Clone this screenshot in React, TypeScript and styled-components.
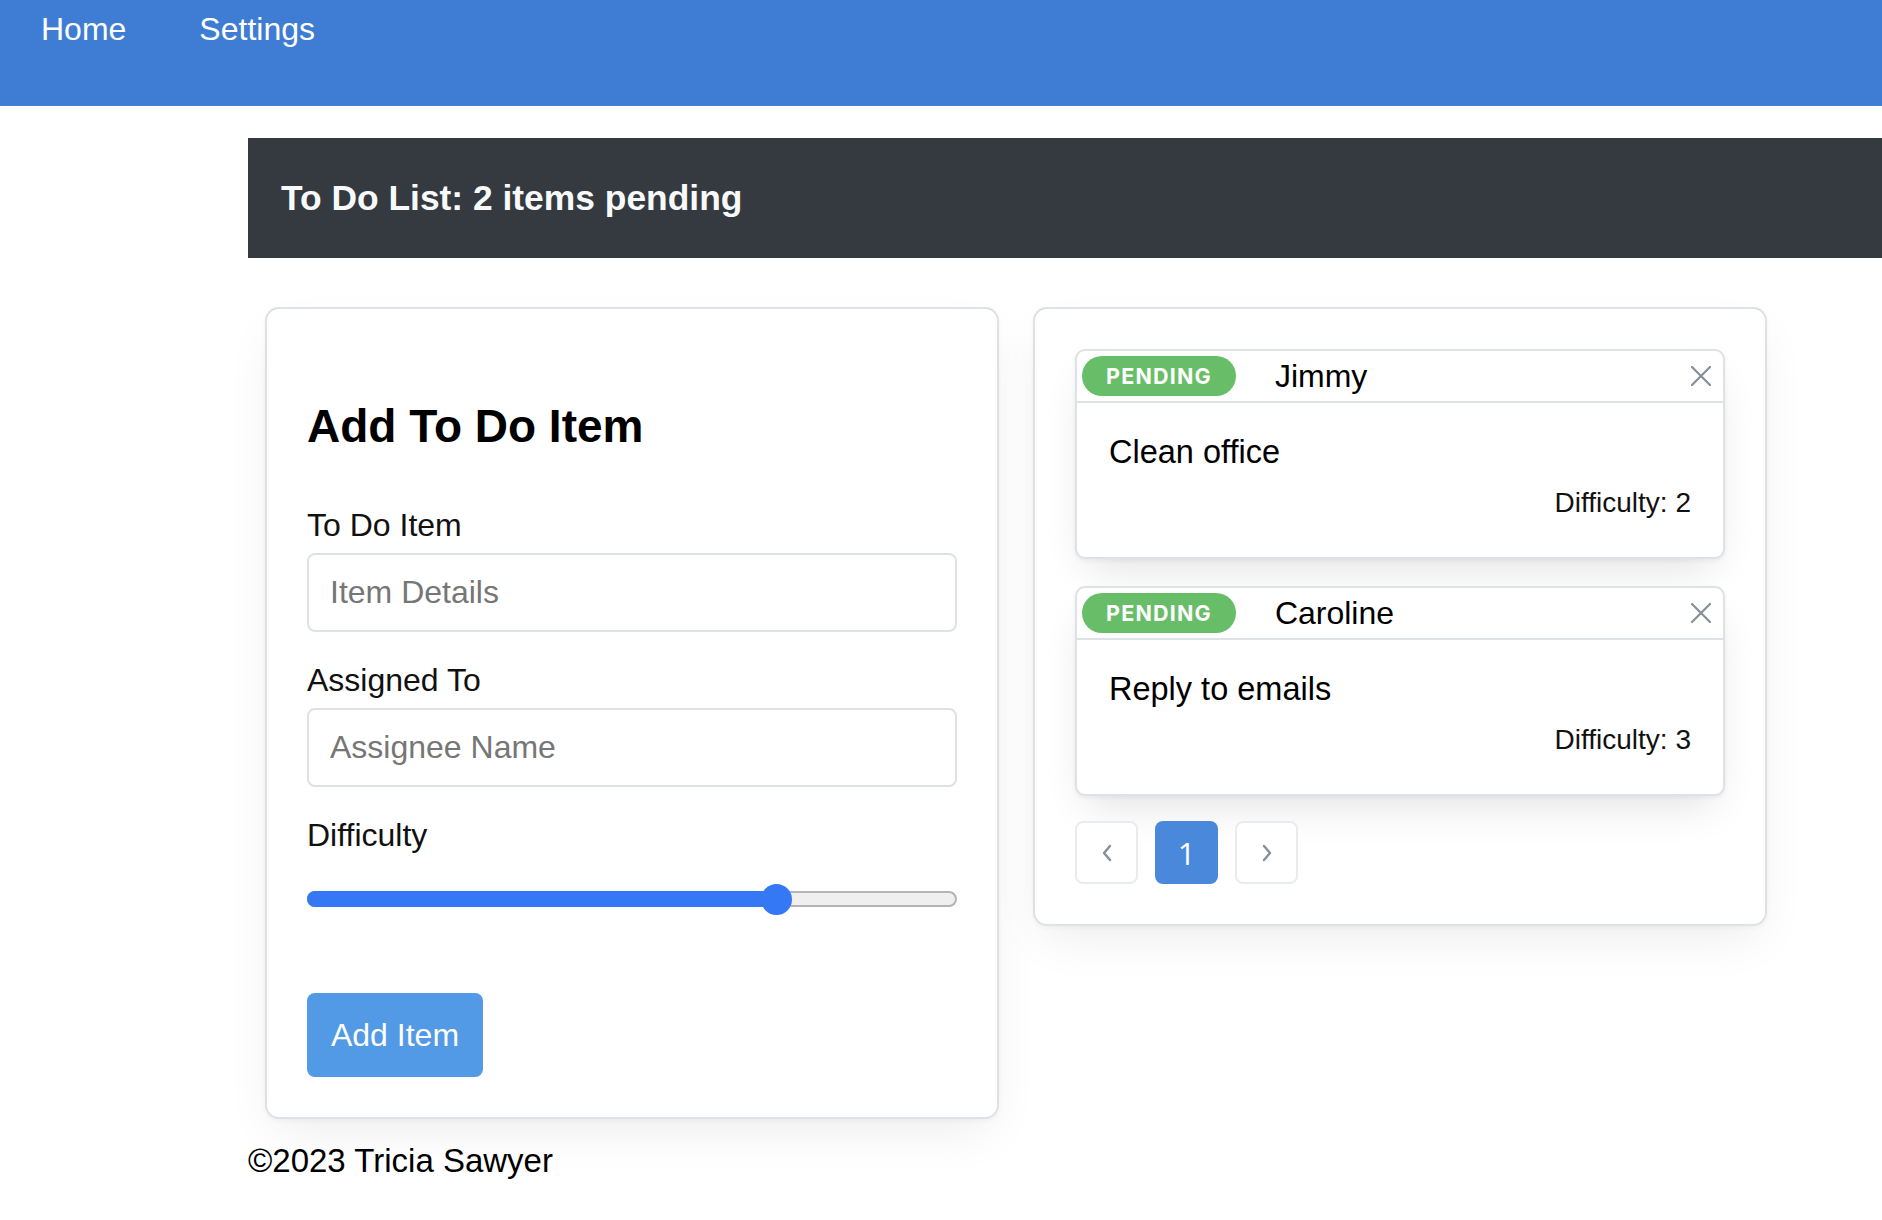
import React from "react";
import styled, { createGlobalStyle } from "styled-components";

const GlobalStyle = createGlobalStyle`
  body {
    margin: 0;
    background: #ffffff;
    font-family: "Liberation Sans", Arial, sans-serif;
    font-size: 32px;
    color: #000;
  }
  * { box-sizing: border-box; }
`;

const NavBar = styled.nav`
  height: 106px;
  background: #3e7dd3;
  display: flex;
  gap: 73px;
  padding: 5px 0 0 41px;
`;

const NavLink = styled.a`
  color: #ffffff;
  font-size: 32px;
  line-height: 48px;
  text-decoration: none;
`;

const Main = styled.main`
  padding-left: 248px;
`;

const TitleBar = styled.header`
  margin-top: 32px;
  height: 120px;
  background: #343a40;
  display: flex;
  align-items: center;
  padding-left: 33px;
`;

const Title = styled.h1`
  margin: 0;
  color: #f8f9fa;
  font-size: 35.4px;
  font-weight: 700;
  line-height: 42px;
`;

const Columns = styled.div`
  display: flex;
  align-items: flex-start;
  gap: 34px;
  padding: 49px 0 0 17px;
`;

const Card = styled.section`
  width: 734px;
  background: #fff;
  border: 2px solid #dee2e6;
  border-radius: 14px;
  padding: 40px;
  box-shadow: 0 2px 4px rgba(0, 0, 0, 0.04), 0 20px 50px -10px rgba(0, 0, 0, 0.08);
`;

const FormTitle = styled.h2`
  margin: 0 0 48px;
  padding-top: 50px;
  font-size: 46px;
  line-height: 54px;
  font-weight: 700;
  color: #000;
`;

const Field = styled.label`
  display: flex;
  flex-direction: column;
  gap: 4px;
  & + & {
    margin-top: 24px;
  }
`;

const LabelText = styled.span`
  font-size: 32px;
  line-height: 48px;
  color: #111;
`;

const TextInput = styled.input`
  height: 79px;
  width: 100%;
  border: 2px solid #dee2e6;
  border-radius: 8px;
  padding: 0 21px;
  font-family: "Liberation Sans", Arial, sans-serif;
  font-size: 32px;
  color: #212529;
  background: #fff;
  outline: none;
  &::placeholder {
    color: #767676;
  }
`;

const SliderBox = styled.div`
  margin-top: 24px;
  height: 32px;
  display: flex;
  align-items: center;
`;

const SliderTrack = styled.div`
  position: relative;
  width: 100%;
  height: 16px;
  border-radius: 8px;
  background: #efefef;
  border: 2px solid #b4b4b4;
`;

const SliderFill = styled.div`
  position: absolute;
  left: -2px;
  top: -2px;
  bottom: -2px;
  border-radius: 8px 0 0 8px;
  background: #3478f6;
`;

const SliderThumb = styled.div`
  position: absolute;
  top: 50%;
  width: 31px;
  height: 31px;
  margin-left: -15.5px;
  margin-top: -15.5px;
  border-radius: 50%;
  background: #3478f6;
`;

const SubmitButton = styled.button`
  margin-top: 78px;
  width: 176px;
  height: 84px;
  border: none;
  border-radius: 8px;
  background: #529ae6;
  color: #fff;
  font-family: "Liberation Sans", Arial, sans-serif;
  font-size: 32px;
  display: flex;
  align-items: center;
  justify-content: center;
`;

const ItemList = styled.div`
  display: flex;
  flex-direction: column;
  gap: 27px;
`;

const ItemCard = styled.article`
  border: 2px solid #dee2e6;
  border-radius: 10px;
  background: #fff;
  box-shadow: 0 2px 4px rgba(0, 0, 0, 0.05), 0 20px 40px -12px rgba(0, 0, 0, 0.12);
`;

const ItemHeader = styled.div`
  height: 52px;
  display: flex;
  align-items: center;
  padding: 0 4px 0 5px;
  border-bottom: 2px solid #dee2e6;
`;

const Badge = styled.span`
  height: 40px;
  padding: 0 24px;
  border-radius: 20px;
  background: #68bd68;
  color: #fff;
  font-family: Inter, "Noto Sans", sans-serif;
  font-weight: 700;
  font-size: 21.5px;
  letter-spacing: 1.2px;
  display: flex;
  align-items: center;
`;

const Assignee = styled.span`
  margin-left: 39px;
  font-size: 32px;
  line-height: 48px;
`;

const CloseButton = styled.button`
  margin-left: auto;
  width: 36px;
  height: 36px;
  border: none;
  background: transparent;
  padding: 0;
  display: flex;
  align-items: center;
  justify-content: center;
  color: #868e96;
`;

const ItemBody = styled.div`
  padding: 25px 32px 33px;
  display: flex;
  flex-direction: column;
  gap: 6px;
`;

const TaskText = styled.p`
  margin: 0;
  font-size: 32.5px;
  line-height: 48px;
`;

const DifficultyText = styled.p`
  margin: 0;
  font-size: 28px;
  line-height: 42px;
  text-align: right;
  color: #111;
`;

const Pager = styled.div`
  margin-top: 25px;
  display: flex;
  gap: 17px;
`;

const PageButton = styled.button<{ $active?: boolean }>`
  width: 63px;
  height: 63px;
  border-radius: 8px;
  border: ${(p) => (p.$active ? "none" : "2px solid #e9ecef")};
  background: ${(p) => (p.$active ? "#4a88dc" : "#fff")};
  color: ${(p) => (p.$active ? "#fff" : "#868e96")};
  font-family: "Open Sans", sans-serif;
  font-size: 31px;
  padding: 0;
  display: flex;
  align-items: center;
  justify-content: center;
`;

const Footer = styled.footer`
  margin-top: 18px;
  font-size: 33px;
  line-height: 48px;
`;

const CloseIcon = () => (
  <svg width="20" height="20" viewBox="0 0 20 20" fill="none">
    <path d="M1 1L19 19M19 1L1 19" stroke="currentColor" strokeWidth="2.2" strokeLinecap="round" />
  </svg>
);

const Chevron = ({ dir }: { dir: "left" | "right" }) => (
  <svg width="14" height="20" viewBox="0 0 14 20" fill="none">
    <path
      d={dir === "left" ? "M10 3L4 10L10 17" : "M4 3L10 10L4 17"}
      stroke="currentColor"
      strokeWidth="2.4"
      strokeLinecap="round"
      strokeLinejoin="round"
    />
  </svg>
);

const items = [
  { name: "Jimmy", text: "Clean office", difficulty: 2 },
  { name: "Caroline", text: "Reply to emails", difficulty: 3 },
];

export default function App() {
  const sliderPct = 72.3;
  return (
    <>
      <GlobalStyle />
      <NavBar>
        <NavLink>Home</NavLink>
        <NavLink>Settings</NavLink>
      </NavBar>
      <Main>
        <TitleBar>
          <Title>To Do List: 2 items pending</Title>
        </TitleBar>
        <Columns>
          <Card>
            <FormTitle>Add To Do Item</FormTitle>
            <Field>
              <LabelText>To Do Item</LabelText>
              <TextInput placeholder="Item Details" />
            </Field>
            <Field>
              <LabelText>Assigned To</LabelText>
              <TextInput placeholder="Assignee Name" />
            </Field>
            <Field>
              <LabelText>Difficulty</LabelText>
            </Field>
            <SliderBox>
              <SliderTrack>
                <SliderFill style={{ width: `calc(${sliderPct}% + 2px)` }} />
                <SliderThumb style={{ left: `${sliderPct}%` }} />
              </SliderTrack>
            </SliderBox>
            <SubmitButton>Add Item</SubmitButton>
          </Card>
          <Card>
            <ItemList>
              {items.map((it) => (
                <ItemCard key={it.name}>
                  <ItemHeader>
                    <Badge>PENDING</Badge>
                    <Assignee>{it.name}</Assignee>
                    <CloseButton aria-label="close">
                      <CloseIcon />
                    </CloseButton>
                  </ItemHeader>
                  <ItemBody>
                    <TaskText>{it.text}</TaskText>
                    <DifficultyText>Difficulty: {it.difficulty}</DifficultyText>
                  </ItemBody>
                </ItemCard>
              ))}
            </ItemList>
            <Pager>
              <PageButton>
                <Chevron dir="left" />
              </PageButton>
              <PageButton $active>1</PageButton>
              <PageButton>
                <Chevron dir="right" />
              </PageButton>
            </Pager>
          </Card>
        </Columns>
        <Footer>©2023 Tricia Sawyer</Footer>
      </Main>
    </>
  );
}
